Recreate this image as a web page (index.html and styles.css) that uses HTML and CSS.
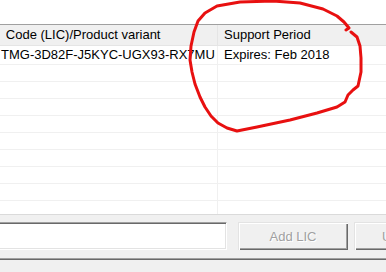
FILE: index.html
```html
<!DOCTYPE html>
<html lang="en">
<head>
    <meta charset="UTF-8">
    <meta name="viewport" content="width=device-width, initial-scale=1.0">
    <title>Licenses</title>
    <link rel="stylesheet" href="styles.css">
</head>
<body>
    <div class="page">
        <div class="list">
            <div class="list-top"></div>
            <div class="list-head">
                <div class="col col-key"><span class="cut">o</span> Code (LIC)/Product variant</div>
                <div class="col col-support">Support Period</div>
            </div>
            <div class="list-body">
                <div class="row row-first">
                    <div class="col col-key">TMG-3D82F-J5KYC-UGX93-RX7MU</div>
                    <div class="col col-support">Expires: Feb 2018</div>
                </div>
                <div class="row"><div class="col col-key"></div><div class="col col-support"></div></div>
                <div class="row"><div class="col col-key"></div><div class="col col-support"></div></div>
                <div class="row"><div class="col col-key"></div><div class="col col-support"></div></div>
                <div class="row"><div class="col col-key"></div><div class="col col-support"></div></div>
                <div class="row"><div class="col col-key"></div><div class="col col-support"></div></div>
                <div class="row"><div class="col col-key"></div><div class="col col-support"></div></div>
                <div class="row"><div class="col col-key"></div><div class="col col-support"></div></div>
                <div class="row"><div class="col col-key"></div><div class="col col-support"></div></div>
                <div class="row"><div class="col col-key"></div><div class="col col-support"></div></div>
            </div>
        </div>
        <div class="actions">
            <div class="lic-input"></div>
            <button class="btn" disabled>Add LIC</button>
            <button class="btn" disabled>Update LIC</button>
        </div>
        <div class="status"></div>

        <!-- hand-drawn marker over the support column -->
        <svg class="marker" viewBox="0 0 386 272" width="386" height="272">
            <path d="M351 32 L357 37 L360 46 L361 58 L361 72 L358 86 L353 90 L348 95 L345 102 L337 107 L317 113 L290 120 L257 127 L237 131 L227 128 L218 123 L211 116 L205 107 L200 97 L195 84 L192 72 L190 60 L191 46 L194 32 L198 21 L205 13 L217 6 L240 2 L273 1 L300 3 L323 9 L337 16 L344 22 L349 28 L346 30"/>
        </svg>
    </div>
</body>
</html>
```

FILE: styles.css
```css
:root {
    --face: #f0f0f0;
    --shadow: #a0a0a0;
    --dark: #696969;
    --light: #e3e3e3;
    --grid: #f0f0f0;
}

body {
    margin: 0;
    font-family: 'Liberation Sans', Arial, sans-serif;
    font-size: 13px;
    color: #000;
    background-color: var(--face);
}

.page {
    position: relative;
    width: 386px;
    height: 272px;
    overflow: hidden;
}

.list {
    background-color: #fff;
    border-bottom: 1px solid #dadada;
}

.list-top {
    height: 24px;
}

.list-head {
    display: flex;
    height: 20px;
    line-height: 20px;
    background-color: var(--face);
    border-top: 1px solid var(--shadow);
    border-bottom: 1px solid #e5e5e5;
    white-space: nowrap;
}

.col {
    flex: none;
    overflow: hidden;
    white-space: nowrap;
}

.col-key {
    width: 217px;
    border-right: 1px solid #e5e5e5;
}

.col-support {
    width: 200px;
    padding-left: 6px;
}

.list-head .col-key {
    padding-left: 0;
}

.cut {
    margin-left: -8px;
    margin-right: 3px;
}

.list-body {
    height: 168px;
    overflow: hidden;
}

.row {
    display: flex;
    height: 16px;
    line-height: 16px;
    border-bottom: 1px solid var(--grid);
}

.row .col-key {
    border-right-color: var(--grid);
    padding-left: 1px;
    width: 216px;
}

.row-first {
    height: 18px;
    line-height: 18px;
}

.actions {
    display: flex;
    align-items: stretch;
    height: 28px;
    margin-top: 7px;
}

.lic-input {
    flex: none;
    width: 237px;
    margin-left: -10px;
    box-sizing: border-box;
    background-color: #fff;
    border-top: 1px solid var(--shadow);
    border-right: 1px solid #fff;
    border-bottom: 1px solid #fff;
    box-shadow: inset 0 1px 0 var(--dark), inset -1px -1px 0 var(--light);
}

.btn {
    flex: none;
    width: 110px;
    margin-left: 11px;
    padding: 0;
    font-family: inherit;
    font-size: 13px;
    color: var(--shadow);
    text-shadow: 1px 1px 0 #fff;
    background-color: var(--face);
    border: none;
    border-radius: 0;
    box-shadow: inset 1px 1px 0 var(--light), inset 2px 2px 0 #fff,
        inset -1px -1px 0 var(--dark), inset -2px -2px 0 var(--shadow);
}

.btn + .btn {
    margin-left: 6px;
    text-align: left;
    padding-left: 28px;
}

.status {
    margin-top: 8px;
    height: 20px;
    border-top: 1px solid var(--shadow);
    box-shadow: inset 0 1px 0 var(--dark);
}

.marker {
    position: absolute;
    top: 0;
    left: 0;
    pointer-events: none;
}

.marker path {
    fill: none;
    stroke: #e81010;
    stroke-width: 3;
    stroke-linejoin: round;
    stroke-linecap: round;
}
```
